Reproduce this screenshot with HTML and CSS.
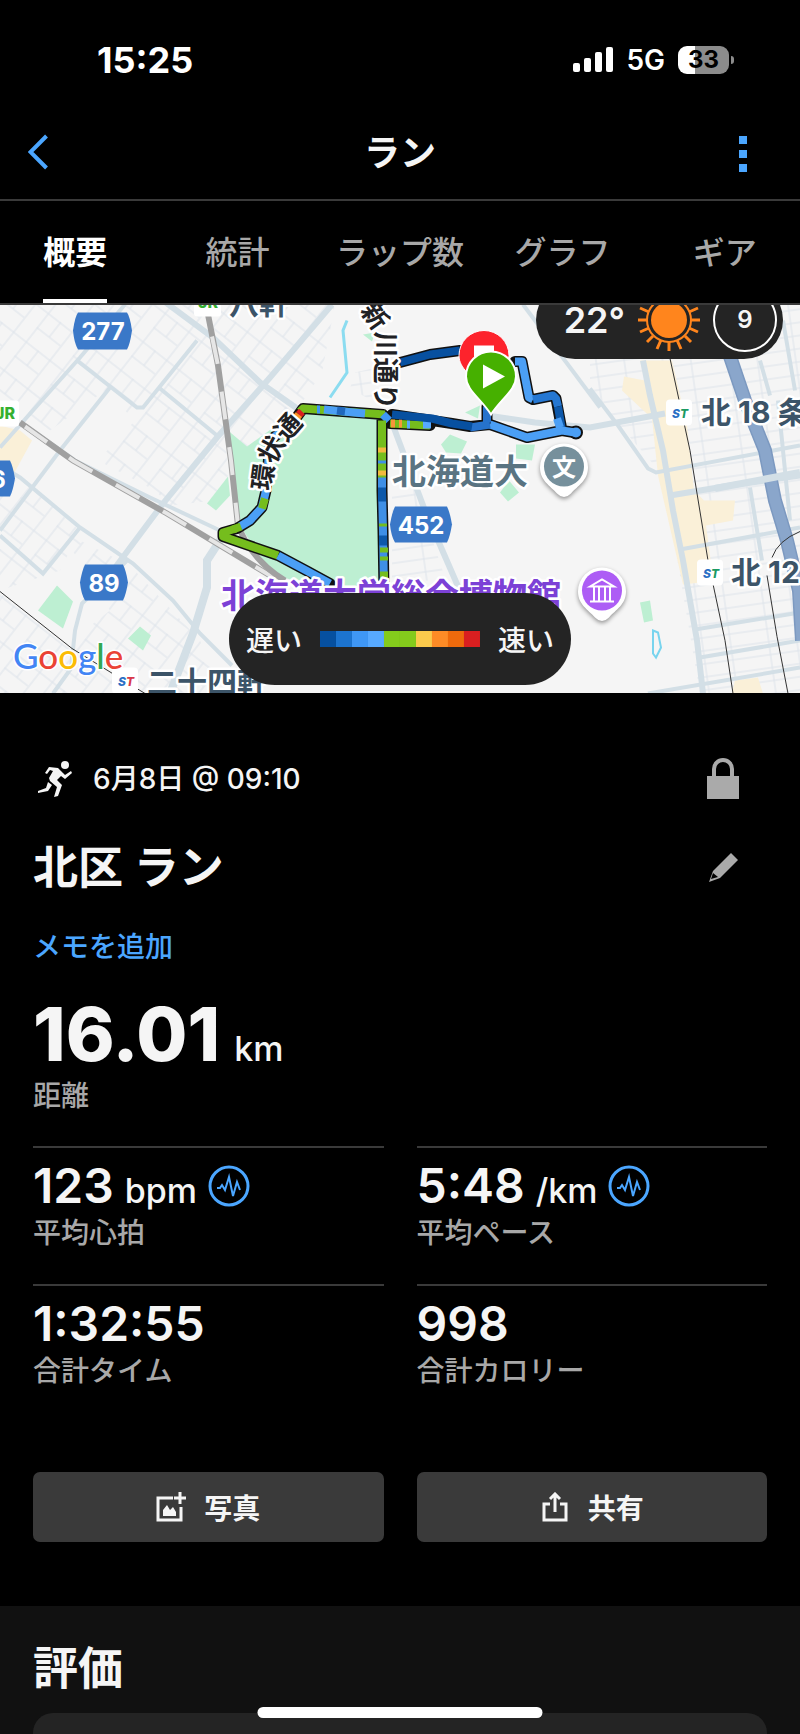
FILE: index.html
```html
<!DOCTYPE html>
<html lang="ja">
<head>
    <meta charset="UTF-8">
    <meta name="viewport" content="width=device-width, initial-scale=1.0">
    <title>ラン</title>
    <link rel="stylesheet" href="styles.css">
</head>
<body>
    <div class="status-bar">
        <div class="time">15:25</div>
        <div class="status-icons">
            <svg class="signal" viewBox="0 0 40 26" width="40" height="26" fill="#fff">
                <rect x="0" y="16" width="7" height="9" rx="2"/>
                <rect x="11" y="11" width="7" height="14" rx="2"/>
                <rect x="22" y="5" width="7" height="20" rx="2"/>
                <rect x="33" y="0" width="7" height="25" rx="2"/>
            </svg>
            <span class="network">5G</span>
            <div class="battery">33</div>
        </div>
    </div>

    <header class="header">
        <button class="icon-btn back" aria-label="戻る">
            <svg viewBox="0 0 20 36" width="20" height="36" fill="none" stroke="#4ba6ff" stroke-width="4"><path d="M18.500 2 L2.500 18 L18.500 34"/></svg>
        </button>
        <h1>ラン</h1>
        <button class="icon-btn more" aria-label="メニュー">
            <svg viewBox="0 0 8 38" width="8" height="38" fill="#4ba6ff"><path d="M0 1h8v8H0zM0 15h8v8H0zM0 29h8v8H0z"/></svg>
        </button>
    </header>

    <nav class="tabs">
        <a href="#" class="active">概要</a>
        <a href="#">統計</a>
        <a href="#">ラップ数</a>
        <a href="#">グラフ</a>
        <a href="#">ギア</a>
    </nav>

    <div class="map">
        <svg class="map-canvas" viewBox="0 304 800 389" preserveAspectRatio="xMidYMid slice">
            <defs>
                <pattern id="streetsWest" width="46" height="36" patternUnits="userSpaceOnUse" patternTransform="rotate(38)">
                    <path d="M0 1H46M0 19H30M1 0V36M16 0V19M31 0V36" fill="none" stroke="#dde3ea" stroke-width="1"/>
                </pattern>
                <pattern id="streetsEast" width="66" height="26" patternUnits="userSpaceOnUse" patternTransform="rotate(-8)">
                    <path d="M0 1H66M0 14H66M12 0V26M40 0V26" fill="none" stroke="#dde3ea" stroke-width="1"/>
                </pattern>
                <path id="kanjo" d="M271 491C272 465 278 449 306 421"/>
                <path id="shinkawa" d="M360 310L376 333V420"/>
            </defs>
            <rect y="304" width="800" height="389" fill="#f5f5f5"/>

            <!-- small streets -->
            <path fill="url(#streetsWest)" d="M0 304H335L322 372 300 405 245 448 225 430 228 475 215 500 170 505 155 490 98 460 135 420 105 390 50 430 0 404z"/>
            <path fill="url(#streetsWest)" d="M0 478L22 480 80 530 60 570 0 590zM60 530L130 565 200 640 222 693H0V592L65 645 110 610z"/>
            <path fill="url(#streetsEast)" d="M590 304H800V693H700L663 475 620 425 590 390z"/>
            <path fill="url(#streetsEast)" d="M355 372L372 368 372 400 350 388zM392 490L415 488 446 580H392z"/>

            <!-- built-up areas and parks -->
            <g fill="#faf0d8">
                <path d="M0 425L20 430 32 440 14 473 0 462z"/>
                <path d="M640 360L672 360 687 425 694 490 704 500H735L733 520 706 525 712 570 717 580 683 584 658 475 652 418 622 390 624 376 645 380z"/>
                <path d="M735 680L758 677 763 693H732z"/>
            </g>
            <g fill="#bdefd2">
                <path d="M228 430L247 446 300 408 383 414 384 590H330L290 579 270 572 240 525z"/>
                <path d="M207 503L228 476 230 495 216 510z"/>
                <path d="M57 585L73 601 63 628 38 610zM140 626L151 635 143 650 128 638z"/>
                <path d="M450 434L467 441 461 453 446 452 441 444zM516 444H535L532 460 516 458zM509 480L519 492 508 501 500 492zM465 412L480 405 478 418zM640 602L650 600 653 620 644 622zM363 334L375 332 372 341z"/>
                <path d="M425 480L440 465 448 475 438 482z"/>
            </g>
            <path d="M347 320L343 330 347 372 330 397" fill="none" stroke="#8bdcf0" stroke-width="3"/>
            <path d="M653 630L658 632 661 647 656 657 653 653z" fill="none" stroke="#78d4ee" stroke-width="2"/>

            <!-- main roads -->
            <g fill="none" stroke="#d3dfe6">
                <g stroke-width="4">
                    <path d="M0 447L80 357 125 304M0 530L60 450 110 387M77 360L137 407H143L197 340"/>
                    <path d="M160 388L217 435M0 465L20 477 80 527 133 563 173 600 200 633 232 665M0 535L43 573 80 527"/>
                    <path d="M25 425L75 460 150 497 220 530M127 560L82 603 75 630 71 668 53 693"/>
                    <path d="M523 304L600 407"/>
                    <path d="M590 388L618 425 648 468 656 472 800 445M680 549L800 527M695 629L800 612M700 657L800 640M648 693L800 667"/>
                    <path d="M760 360L770 395M783 320L795 390M750 487L762 560M778 400L790 520"/>
                </g>
                <g stroke-width="6">
                    <path d="M113 570L163 503 217 437 270 377 332 304M163 300L213 337 260 382 300 410"/>
                    <path d="M220 540L207 560V587L193 633 170 693" stroke-width="8"/>
                    <path d="M393 425L425 510 462 595M487 415L535 422 590 427 665 413"/>
                    <path d="M643 360L650 395 663 450 673 510 683 560 697 640 703 693M670 495L730 485 800 475"/>
                </g>
            </g>
            <path d="M728 350L745 400 765 450 775 500 787 540 799 590 802 640" fill="none" stroke="#7c99c0" stroke-width="14"/>
            <path d="M728 350L745 400 765 450 775 500 787 540 799 590 802 640" fill="none" stroke="#8aa6cb" stroke-width="11"/>
            <path d="M715 488L800 472" stroke="#d3dfe6" stroke-width="7"/>

            <!-- railways -->
            <g fill="none">
                <path d="M20 422L73 460 167 513 275 578" stroke="#a0a0a0" stroke-width="6"/>
                <path d="M25 426L73 460 167 513 275 578" stroke="#e6e6e6" stroke-width="4" stroke-dasharray="27 27"/>
                <path d="M208 314L218 365 231 460 238 525Q252 560 285 580" stroke="#a0a0a0" stroke-width="6"/>
                <path d="M212 336L218 365 231 460 238 525" stroke="#e6e6e6" stroke-width="4" stroke-dasharray="28 28"/>
                <path d="M0 591L72 648 145 693" stroke="#333" stroke-width="1"/>
                <path d="M670 358L690 450 708 560 725 640 733 693M800 531Q778 540 772 557M767 575L777 636 788 693" stroke="#333" stroke-width="1"/>
            </g>

            <!-- run track -->
            <g fill="none" stroke-linejoin="round" stroke-linecap="round">
                <path d="M400 362L430 354 460 350M515 361L522 361 529 397 533 399 553 395 556 398 562 430 574 432M487 406L487 421M575 432L562 430 527 437 490 424 470 426 452 423 432 420 392 414M383 414L343 411 303 408 295 419 270 440 266 490 262 507 250 520 237 528 223 532 223 536 278 555 308 571 330 583M382 418V490L383 530 384 590M390 423L430 425" stroke="#111" stroke-width="11"/>
                <circle cx="576" cy="432" r="6" fill="#4b9ff5" stroke="#111" stroke-width="2"/>
                <g stroke-linecap="butt" stroke-width="8">
                    <path d="M400 362L430 354 460 350" stroke="#0750a0"/>
                    <path d="M515 361H522L529 397 533 399" stroke="#4b9ff5"/>
                    <path d="M533 399L553 395 556 398 558 406" stroke="#2577d2"/>
                    <path d="M558 406L562 430" stroke="#0d58aa"/>
                    <path d="M557 418L560 427" stroke="#4b9ff5"/>
                    <path d="M575 432L562 430 527 437 490 424" stroke="#4b9ff5"/>
                    <path d="M490 424L470 427M487 406V422" stroke="#2672cc"/>
                    <path d="M390 423L430 425" stroke="#75bd1d"/>
                    <path d="M391 423H395M399 423H402" stroke="#f7953a"/>
                    <path d="M407 424H410M423 424H431" stroke="#57a9ff"/>
                    <path d="M472 426L452 423 432 418 392 414" stroke="#0750a0"/>
                    <path d="M385 414L343 411 303 408 300 411" stroke="#75bd1d"/>
                    <path d="M365 413L343 411 324 409" stroke="#4b9ff5"/>
                    <path d="M345 411L337 410" stroke="#2068bd"/>
                    <path d="M320 409H317M383 414L389 420" stroke="#3f97f5"/>
                    <path d="M302 411L299 414" stroke="#d91f20"/>
                    <path d="M299 414L295 419" stroke="#fd8b26"/>
                    <path d="M295 419L270 440 266 490 262 507 250 520 240 526" stroke="#4b9ff5"/>
                    <path d="M265 498L262 508M241 526L233 529" stroke="#75bd1d"/>
                    <path d="M236 528L223 532V536L278 555" stroke="#75bd1d"/>
                    <path d="M278 555L308 571 330 583" stroke="#4b9ff5"/>
                    <path d="M382 420V478" stroke="#75bd1d"/>
                    <path d="M382 447V452M382 470V475" stroke="#f3b93e"/>
                    <path d="M382 460V463M382 477V490L383 530 384 590" stroke="#3f8fe6"/>
                    <path d="M382 487V501M383 535V545" stroke="#0d58aa"/>
                    <path d="M383 523V526M384 547V552M384 556V560M384 571V578" stroke="#75bd1d"/>
                </g>
            </g>

            <!-- road number shields -->
            <g class="shield">
                <path d="M78 312H127Q130 316 132 330Q130 344 127 349H78Q74 342 73 330Q75 316 78 312z"/>
                <text x="103" y="339">277</text>
                <path d="M395 506H447Q450 512 452 524Q450 536 447 542H395Q391 535 390 524Q392 512 395 506z"/>
                <text x="421" y="533">452</text>
                <path d="M85 564H123Q126 570 128 582Q126 594 123 600H85Q81 593 80 582Q82 570 85 564z"/>
                <text x="104" y="591">89</text>
                <path d="M-12 460H10Q13 466 15 478Q13 490 10 496H-12z"/>
                <text x="-2" y="487">6</text>
            </g>

            <!-- stations -->
            <g fill="#fff">
                <rect x="194" y="290" width="27" height="26" rx="3"/>
                <rect x="-8" y="400" width="27" height="26" rx="3"/>
                <rect x="666" y="399" width="26" height="26" rx="4"/>
                <rect x="697" y="559" width="26" height="26" rx="4"/>
                <rect x="112" y="667" width="26" height="26" rx="4"/>
            </g>
            <g class="jr">
                <text x="198" y="307">JR</text>
                <text x="-5" y="418">JR</text>
            </g>
            <g class="st">
                <text x="672" y="417"><tspan fill="#2a6fc4">S</tspan><tspan fill="#1b9a63">T</tspan></text>
                <text x="703" y="577"><tspan fill="#2a6fc4">S</tspan><tspan fill="#1b9a63">T</tspan></text>
                <text x="118" y="685"><tspan fill="#2a6fc4">S</tspan><tspan fill="#d8394a">T</tspan></text>
            </g>
            <g class="station">
                <text x="229" y="313">八軒</text>
                <text x="147" y="692">二十四軒</text>
                <text x="701" y="422">北 18 条</text>
                <text x="731" y="582">北 12</text>
            </g>
            <g class="street">
                <text><textPath href="#kanjo">環状通</textPath></text>
                <text><textPath href="#shinkawa">新川通り</textPath></text>
            </g>
            <text class="university" x="392" y="483">北海道大</text>
            <text class="museum" x="221" y="607">北海道大学総合博物館</text>

            <!-- place pins -->
            <g class="pin">
                <path fill="#fff" d="M564 443a24 24 0 0 1 24 24c0 13-10 18-17 26q-7 7-14 0c-7-8-17-13-17-26a24 24 0 0 1 24-24z"/>
                <circle cx="564" cy="466" r="20" fill="#76909c"/>
                <path fill="#fff" d="M602 567a24 24 0 0 1 24 24c0 13-10 18-17 26q-7 7-14 0c-7-8-17-13-17-26a24 24 0 0 1 24-24z"/>
                <circle cx="602" cy="590" r="20" fill="#ad5df5"/>
            </g>
            <text class="pin-text" x="564" y="475">文</text>
            <path d="M590 586L602 579 614 586zM594 587V600M599 587V600M605 587V600M610 587V600M590 601H614" fill="none" stroke="#fff" stroke-width="2"/>

            <!-- finish and start -->
            <path d="M484 330a25 25 0 0 1 25 25c0 14-14 20-25 37-11-17-25-23-25-37a25 25 0 0 1 25-25z" fill="#fd232c" stroke="#fff" stroke-width="1"/>
            <path d="M474 345H494V362H474z" fill="#fff"/>
            <path d="M491 351a25 25 0 0 1 25 25c0 14-15 22-25 38-10-16-25-24-25-38a25 25 0 0 1 25-25z" fill="#46b000" stroke="#fff" stroke-width="2"/>
            <path d="M483 364L505 376 483 388z" fill="#fff"/>

            <text class="google" x="13" y="668"><tspan fill="#4285f4">G</tspan><tspan fill="#ea4335">o</tspan><tspan fill="#fbbc05">o</tspan><tspan fill="#4285f4">g</tspan><tspan fill="#34a853">l</tspan><tspan fill="#ea4335">e</tspan></text>
        </svg>

        <div class="weather">
            <span>22°</span>
            <svg viewBox="-32 -32 64 64" width="64" height="64" stroke="#ff851d" stroke-width="3" fill="none">
                <circle r="18" fill="#ff851d" stroke="none"/>
                <circle r="22" stroke-width="2"/>
                <path d="M0 22V31M0-22V-31M22 0H31M-22 0H-31M8 20L12 29M-8 20L-12 29M8-20L12-29M-8-20L-12-29M20 8L29 12M20-8L29-12M-20 8L-29 12M-20-8L-29-12M16 16L22 22M-16 16L-22 22M16-16L22-22M-16-16L-22-22"/>
            </svg>
            <div class="wind">9</div>
        </div>

        <div class="legend">
            <span>遅い</span>
            <div class="scale">
                <i class="c1"></i><i class="c2"></i><i class="c3"></i><i class="c4"></i><i class="c5"></i>
                <i class="c5"></i><i class="c6"></i><i class="c7"></i><i class="c8"></i><i class="c9"></i>
            </div>
            <span>速い</span>
        </div>
    </div>

    <main class="details">
        <div class="row date-row">
            <svg viewBox="0 0 34 36" width="34" height="36" fill="#f5f5f5">
                <circle cx="27" cy="4" r="4"/>
                <path d="M11 6L20 7 25 12 27 14 33 10 34 12 27 18 23 15 19 19 24 24 20 35 16 36 19 26 12 20 11 17 15 10 12 9 9 13 7 12z"/>
                <path d="M10 21L14 24 10 30 0 32 0 30 8 27z"/>
            </svg>
            <span class="date">6月8日 @ 09:10</span>
            <button class="icon-btn" aria-label="プライバシー">
                <svg viewBox="0 0 32 42" width="32" height="42"><path d="M0 18H32V41H0z" fill="#aaa"/><path d="M7 19V11a9 9 0 0 1 18 0V19" fill="none" stroke="#aaa" stroke-width="4"/></svg>
            </button>
        </div>
        <div class="row name-row">
            <h2>北区 ラン</h2>
            <button class="icon-btn" aria-label="編集">
                <svg viewBox="0 0 30 30" width="30" height="30"><path d="M22 0L29 7 11 25 0 29 4 18z" fill="#aaa"/><path d="M4 20L9 24 2 26z" fill="#000"/></svg>
            </button>
        </div>
        <a href="#" class="memo">メモを追加</a>

        <div class="distance">16.01<small>km</small></div>
        <div class="label">距離</div>

        <div class="stats">
            <div class="stat">
                <div class="value">123 <small>bpm</small>
                    <svg viewBox="0 0 42 42" width="42" height="42" fill="none" stroke="#4ba6ff" stroke-width="3"><circle cx="21" cy="21" r="19"/><path d="M9 23L12 23 14 20 17 25 21 12 25 31 29 17 32 25" stroke-width="2"/></svg>
                </div>
                <div class="label">平均心拍</div>
            </div>
            <div class="stat">
                <div class="value">5:48 <small>/km</small>
                    <svg viewBox="0 0 42 42" width="42" height="42" fill="none" stroke="#4ba6ff" stroke-width="3"><circle cx="21" cy="21" r="19"/><path d="M9 23L12 23 14 20 17 25 21 12 25 31 29 17 32 25" stroke-width="2"/></svg>
                </div>
                <div class="label">平均ペース</div>
            </div>
            <div class="stat">
                <div class="value">1:32:55</div>
                <div class="label">合計タイム</div>
            </div>
            <div class="stat">
                <div class="value">998</div>
                <div class="label">合計カロリー</div>
            </div>
        </div>

        <div class="actions">
            <button>
                <svg viewBox="0 0 30 30" width="30" height="30" fill="none" stroke="#f5f5f5" stroke-width="3"><path d="M17 6H2V28H25V15M24 0V12M18 6H30"/><path d="M7 24V18L11 13 14 18 17 15 20 20V24z" fill="#f5f5f5" stroke="none"/></svg>
                写真
            </button>
            <button>
                <svg viewBox="0 0 30 30" width="30" height="30" fill="none" stroke="#f5f5f5" stroke-width="3"><path d="M10 12H4V28H26V12H20M15 20V3M10 7L15 2 20 7"/></svg>
                共有
            </button>
        </div>
    </main>

    <section class="review">
        <h2>評価</h2>
        <div class="card"></div>
    </section>

    <div class="home-bar"></div>
</body>
</html>
```
FILE: styles.css
```css
* {
    box-sizing: border-box;
}
body {
    margin: 0;
    height: 100vh;
    overflow: hidden;
    display: flex;
    flex-direction: column;
    background-color: #000;
    color: #f5f5f5;
    font-family: Inter, "Noto Sans CJK JP", sans-serif;
    font-size: 28px;
    font-weight: 500;
}
h1, h2 {
    margin: 0;
    font-weight: 700;
}
a {
    text-decoration: none;
}
button {
    border: none;
    padding: 0;
    color: inherit;
    font: inherit;
}
svg {
    display: block;
    flex-shrink: 0;
}
.icon-btn {
    background: none;
}

/* status bar */
.status-bar {
    display: flex;
    justify-content: space-between;
    align-items: center;
    height: 105px;
    padding: 15px 71px 0 97px;
    color: #fff;
}
.time {
    font-size: 36px;
    font-weight: 700;
}
.status-icons {
    display: flex;
    align-items: center;
    gap: 13px;
}
.network {
    font-weight: 600;
}
.battery {
    position: relative;
    width: 51px;
    height: 28px;
    border-radius: 9px;
    background: linear-gradient(90deg, #fff 34%, #8c8c8c 34%);
    color: #000;
    font-size: 24px;
    font-weight: 700;
    line-height: 28px;
    text-align: center;
}
.battery::after {
    content: "";
    position: absolute;
    left: 53px;
    top: 10px;
    width: 3px;
    height: 8px;
    border-radius: 0 3px 3px 0;
    background-color: #8c8c8c;
}

/* header and tabs */
.header {
    display: grid;
    grid-template-columns: 1fr auto 1fr;
    align-items: center;
    height: 96px;
    border-bottom: 2px solid #3a3a3a;
}
.header h1 {
    padding-bottom: 4px;
    font-size: 36px;
}
.back {
    justify-self: start;
    margin-left: 28px;
}
.more {
    justify-self: end;
    margin: 4px 53px 0 0;
}
.tabs {
    display: grid;
    grid-template-columns: repeat(5, 1fr);
    justify-items: center;
    height: 104px;
    margin: 0 -6px;
    border-bottom: 2px solid #3a3a3a;
    flex-shrink: 0;
}
.tabs a {
    color: #a8a8a8;
    font-size: 32px;
    line-height: 92px;
    padding-top: 6px;
    border-bottom: 4px solid transparent;
}
.tabs .active {
    color: #fff;
    font-weight: 700;
    border-color: #fff;
}

/* map */
.map {
    position: relative;
    height: 388px;
    overflow: hidden;
    flex-shrink: 0;
}
.map-canvas {
    width: 100%;
    height: 100%;
}
.shield path {
    fill: #3a78c8;
}
.shield text {
    fill: #fff;
    font-size: 24px;
    font-weight: 700;
    text-anchor: middle;
}
.jr text {
    fill: #35b030;
    font-size: 16px;
    font-weight: 800;
}
.st text {
    font-size: 12px;
    font-style: italic;
    font-weight: 800;
}
.station text, .street text, .university, .museum {
    stroke: #fff;
    stroke-width: 5px;
    stroke-linejoin: round;
    paint-order: stroke;
}
.station text {
    fill: #3c5468;
    font-size: 30px;
    font-weight: 700;
}
.street text {
    fill: #202124;
    font-size: 26px;
    font-weight: 700;
}
.university {
    fill: #5a7482;
    font-size: 34px;
    font-weight: 700;
}
.museum {
    fill: #7c41d6;
    font-size: 34px;
    font-weight: 700;
}
.pin {
    filter: drop-shadow(0 2px 2px #0006);
}
.pin-text {
    fill: #fff;
    font-size: 24px;
    font-weight: 700;
    text-anchor: middle;
}
.google {
    font-family: Lato, sans-serif;
    font-size: 35px;
    stroke: #fff;
    stroke-width: 3px;
    paint-order: stroke;
}
.weather {
    position: absolute;
    top: -24px;
    right: 17px;
    display: flex;
    align-items: center;
    height: 78px;
    padding: 0 6px 0 28px;
    gap: 12px;
    border-radius: 39px;
    background-color: #242424;
    font-size: 36px;
    font-weight: 600;
}
.wind {
    width: 64px;
    height: 64px;
    border: 2px solid #fff;
    border-radius: 50%;
    font-size: 24px;
    line-height: 60px;
    text-align: center;
}
.legend {
    position: absolute;
    bottom: 8px;
    left: 50%;
    transform: translateX(-50%);
    display: flex;
    align-items: center;
    gap: 18px;
    height: 92px;
    padding: 0 17px;
    border-radius: 46px;
    background-color: #242424;
    white-space: nowrap;
}
.scale {
    display: flex;
}
.scale i {
    width: 16px;
    height: 16px;
}
.c1 { background-color: #0650a0; }
.c2 { background-color: #1c74d0; }
.c3 { background-color: #3f97f5; }
.c4 { background-color: #57a9ff; }
.c5 { background-color: #84cb1c; }
.c6 { background-color: #fbca4c; }
.c7 { background-color: #fd8b26; }
.c8 { background-color: #ee6a0c; }
.c9 { background-color: #d91f20; }

/* activity details */
.details {
    padding: 60px 33px 64px;
}
.row {
    display: flex;
    align-items: center;
    height: 56px;
}
.row .icon-btn {
    margin: 0 28px 0 auto;
}
.date-row {
    height: 52px;
    padding-left: 5px;
}
.date {
    margin-left: 21px;
    padding-bottom: 4px;
}
.name-row {
    margin-top: 35px;
}
h2 {
    font-size: 45px;
    line-height: 56px;
}
.memo {
    display: block;
    margin-top: 31px;
    color: #4ba6ff;
    line-height: 40px;
}
.distance {
    display: flex;
    align-items: baseline;
    gap: 14px;
    height: 80px;
    margin-top: 27px;
    font-size: 74px;
    font-weight: 800;
    line-height: 80px;
}
small {
    font-size: 34px;
    font-weight: 500;
    line-height: 40px;
}
.distance + .label {
    margin-top: 5px;
}
.label {
    color: #a8a8a8;
    line-height: 34px;
}
.stats {
    display: grid;
    grid-template-columns: 1fr 1fr;
    column-gap: 33px;
    margin-top: 33px;
}
.stat {
    height: 138px;
    padding-top: 8px;
    border-top: 2px solid #3a3a3a;
}
.value {
    display: flex;
    align-items: baseline;
    gap: 11px;
    height: 60px;
    font-size: 48px;
    font-weight: 600;
    line-height: 60px;
}
.value svg {
    align-self: center;
}
.actions {
    display: grid;
    grid-template-columns: 1fr 1fr;
    gap: 33px;
    margin-top: 50px;
}
.actions button {
    display: flex;
    justify-content: center;
    align-items: center;
    gap: 18px;
    height: 70px;
    border-radius: 7px;
    background-color: #3a3a3a;
    font-weight: 600;
}

/* review */
.review {
    display: flex;
    flex-direction: column;
    flex: 1;
    padding: 35px 33px 0;
    background-color: #111;
}
.card {
    flex: 1;
    margin-top: 16px;
    border-radius: 20px 20px 0 0;
    background-color: #242424;
}
.home-bar {
    position: fixed;
    bottom: 16px;
    left: 50%;
    width: 285px;
    height: 11px;
    transform: translateX(-50%);
    border-radius: 6px;
    background-color: #fff;
}
```
